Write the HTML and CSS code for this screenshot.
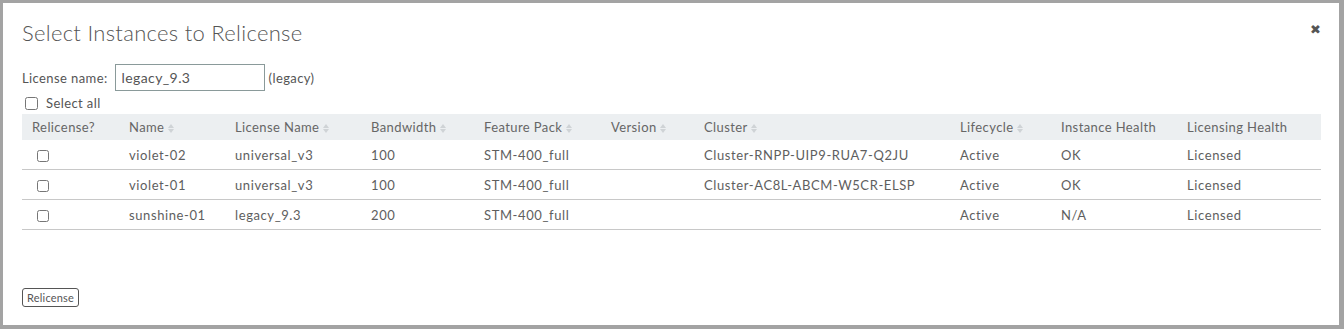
FILE: index.html
```html
<!DOCTYPE html>
<html lang="en">
<head>
    <meta charset="UTF-8">
    <title>Select Instances to Relicense</title>
    <link rel="stylesheet" href="styles.css">
</head>
<body>
    <div class="modal">
        <div class="modal-header">
            <h2>Select Instances to Relicense</h2>
            <span class="close">&#10006;</span>
        </div>
        <div class="license-row">
            <label for="licName">License name:</label>
            <input type="text" id="licName" value="legacy_9.3">
            <span class="hint">(legacy)</span>
        </div>
        <label class="select-all"><input type="checkbox"> Select all</label>
        <table class="instances">
            <thead>
                <tr>
                    <th class="c-check">Relicense?</th>
                    <th class="c-name">Name <span class="sort"></span></th>
                    <th class="c-lic">License Name <span class="sort"></span></th>
                    <th class="c-bw">Bandwidth <span class="sort"></span></th>
                    <th class="c-fp">Feature Pack <span class="sort"></span></th>
                    <th class="c-ver">Version <span class="sort"></span></th>
                    <th class="c-cluster">Cluster <span class="sort"></span></th>
                    <th class="c-life">Lifecycle <span class="sort"></span></th>
                    <th class="c-ih">Instance Health</th>
                    <th>Licensing Health</th>
                </tr>
            </thead>
            <tbody>
                <tr>
                    <td><input type="checkbox"></td>
                    <td>violet-02</td>
                    <td>universal_v3</td>
                    <td>100</td>
                    <td>STM-400_full</td>
                    <td></td>
                    <td>Cluster-RNPP-UIP9-RUA7-Q2JU</td>
                    <td>Active</td>
                    <td>OK</td>
                    <td>Licensed</td>
                </tr>
                <tr>
                    <td><input type="checkbox"></td>
                    <td>violet-01</td>
                    <td>universal_v3</td>
                    <td>100</td>
                    <td>STM-400_full</td>
                    <td></td>
                    <td>Cluster-AC8L-ABCM-W5CR-ELSP</td>
                    <td>Active</td>
                    <td>OK</td>
                    <td>Licensed</td>
                </tr>
                <tr>
                    <td><input type="checkbox"></td>
                    <td>sunshine-01</td>
                    <td>legacy_9.3</td>
                    <td>200</td>
                    <td>STM-400_full</td>
                    <td></td>
                    <td></td>
                    <td>Active</td>
                    <td>N/A</td>
                    <td>Licensed</td>
                </tr>
            </tbody>
        </table>
        <button type="button" class="btn">Relicense</button>
    </div>
</body>
</html>
```

FILE: styles.css
```css
html, body {
    margin: 0;
    height: 100%;
}

body {
    background: #a3a3a3;
    padding: 3px 5px 4px 3px;
    box-sizing: border-box;
    font-family: "Lato", sans-serif;
    color: #555;
}

.modal {
    background: #fff;
    height: 100%;
    padding: 0 18px 0 19px;
    box-sizing: border-box;
}

.modal-header {
    display: flex;
    justify-content: space-between;
    align-items: flex-start;
    height: 60px;
}

.modal-header h2 {
    margin: 16px 0 0;
    font-size: 22px;
    font-weight: 300;
    letter-spacing: 0.3px;
    color: #555;
}

.close {
    margin: 18px 0 0 0;
    font-size: 13px;
    color: #555;
}

.license-row {
    display: flex;
    align-items: center;
    font-size: 13px;
    letter-spacing: 0.4px;
    height: 29px;
}

.license-row label {
    margin-right: 7px;
}

.license-row input {
    width: 150px;
    height: 27px;
    box-sizing: border-box;
    border: 1px solid #8a9a9a;
    padding: 0 6px;
    font: 14px "Lato", sans-serif;
    letter-spacing: 0.4px;
    color: #555;
}

.hint {
    margin-left: 4px;
}

.select-all {
    display: flex;
    align-items: center;
    font-size: 13px;
    letter-spacing: 0.4px;
    height: 22px;
    margin-left: 3px;
}

.select-all input {
    margin: 0 8px 0 0;
    width: 13px;
    height: 13px;
}

.instances {
    width: 100%;
    border-collapse: collapse;
    font-size: 13px;
    letter-spacing: 0.6px;
    table-layout: fixed;
    color: #5e5e5e;
}

.instances th {
    background: #eceff1;
    color: #666;
    font-weight: 400;
    letter-spacing: 0.4px;
    text-align: left;
    height: 26px;
    padding: 0 10px;
    white-space: nowrap;
}

.instances td {
    height: 29px;
    padding: 0 10px;
    border-bottom: 1px solid #c8c8c8;
    white-space: nowrap;
}

.instances td input {
    margin: 0 0 0 5px;
    width: 12px;
    height: 12px;
    vertical-align: middle;
}

.c-check { width: 77px; }
.c-name { width: 86px; }
.c-lic { width: 116px; }
.c-bw { width: 93px; }
.c-fp { width: 107px; }
.c-ver { width: 73px; }
.c-cluster { width: 236px; }
.c-life { width: 81px; }
.c-ih { width: 106px; }

.sort {
    display: inline-block;
    width: 6px;
    height: 11px;
    vertical-align: middle;
    position: relative;
}

.sort::before, .sort::after {
    content: "";
    position: absolute;
    left: 0;
    border-left: 3px solid transparent;
    border-right: 3px solid transparent;
}

.sort::before {
    top: 1px;
    border-bottom: 4px solid #cfd3d6;
}

.sort::after {
    bottom: 1px;
    border-top: 4px solid #cfd3d6;
}

.btn {
    margin-top: 58px;
    font: 11px "Lato", sans-serif;
    letter-spacing: 0.2px;
    color: #555;
    background: #fff;
    border: 1px solid #555;
    border-radius: 3px;
    padding: 2px 4px;
}
```
